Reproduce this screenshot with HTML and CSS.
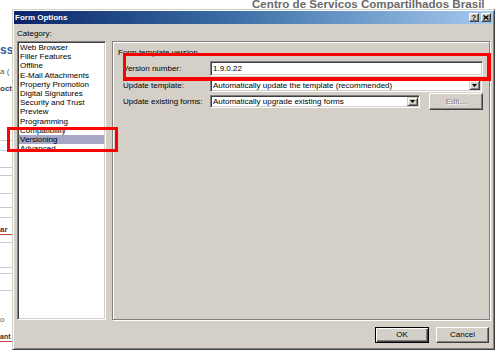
FILE: index.html
```html
<!DOCTYPE html>
<html>
<head>
<meta charset="utf-8">
<title>Form Options</title>
<link rel="stylesheet" href="styles.css">
</head>
<body>
<div class="page">
  <div class="page-header">Centro de Servicos Compartilhados Brasil</div>
  <div class="page-strip">
    <div class="frag frag-ss">ss</div>
    <div class="frag frag-a">a (</div>
    <div class="frag frag-oct">oct</div>
    <div class="sline s1"></div>
    <div class="sline s2"></div>
    <div class="sline s3"></div>
    <div class="sline s4"></div>
    <div class="sline s5"></div>
    <div class="sline s6"></div>
    <div class="sline s7"></div>
    <div class="frag frag-ar">ar</div>
    <div class="sline s8"></div>
    <div class="sline s9"></div>
    <div class="sline s10"></div>
    <div class="sline s11"></div>
    <div class="frag frag-o">o</div>
    <div class="frag frag-anty">ant</div>
  </div>
</div>

<div class="dialog">
  <div class="titlebar">
    <span class="title">Form Options</span>
    <span class="tb-btns">
      <span class="tb-btn">?</span>
      <span class="tb-btn"><svg width="6" height="5" viewBox="0 0 6 5"><path d="M0.5 0.5 L5.5 4.5 M5.5 0.5 L0.5 4.5" stroke="#000" stroke-width="1.4" fill="none"/></svg></span>
    </span>
  </div>
  <div class="body">
    <div class="cat-label">Category:</div>
    <ul class="listbox">
      <li>Web Browser</li>
      <li>Filler Features</li>
      <li>Offline</li>
      <li>E-Mail Attachments</li>
      <li>Property Promotion</li>
      <li>Digital Signatures</li>
      <li>Security and Trust</li>
      <li>Preview</li>
      <li>Programming</li>
      <li>Compatibility</li>
      <li class="selected">Versioning</li>
      <li>Advanced</li>
    </ul>
    <div class="panel">
      <div class="section">Form template version</div>
      <div class="row row-version">
        <span class="lbl">Version number:</span>
        <div class="textbox">1.9.0.22</div>
      </div>
      <div class="row row-update">
        <span class="lbl">Update template:</span>
        <div class="select select-wide">
          <span class="sel-text">Automatically update the template (recommended)</span>
          <span class="dd-btn"><svg width="5" height="3" viewBox="0 0 5 3"><path d="M0 0 H5 L2.5 3 Z" fill="#000"/></svg></span>
        </div>
      </div>
      <div class="row row-existing">
        <span class="lbl">Update existing forms:</span>
        <div class="select select-narrow">
          <span class="sel-text">Automatically upgrade existing forms</span>
          <span class="dd-btn"><svg width="5" height="3" viewBox="0 0 5 3"><path d="M0 0 H5 L2.5 3 Z" fill="#000"/></svg></span>
        </div>
        <button class="btn btn-edit" disabled>Edit...</button>
      </div>
    </div>
  </div>
  <div class="footer">
    <button class="btn btn-ok">OK</button>
    <button class="btn btn-cancel">Cancel</button>
  </div>
</div>

<div class="annot annot-list"></div>
<div class="annot annot-version"></div>
</body>
</html>
```

FILE: styles.css
```css
* { box-sizing: border-box; }
html, body { margin: 0; padding: 0; }
body {
  width: 503px;
  height: 352px;
  background: #fff;
  position: relative;
  overflow: hidden;
  font-family: "Liberation Sans", Arial, sans-serif;
  font-size: 8px;
  color: #000;
}

/* background page */
.page-header {
  margin-top: -2px;
  height: 12px;
  line-height: 12px;
  padding-left: 252px;
  font-weight: bold;
  font-size: 11.6px;
  color: #6b6b6b;
  white-space: nowrap;
}
.page-strip { width: 12px; overflow: hidden; }
.frag { white-space: nowrap; font-size: 8px; line-height: 8px; height: 8px; color: #333; }
.frag-ss { margin-top: 35px; height: 10px; line-height: 10px; font-size: 12px; font-weight: bold; color: #2d5ca6; }
.frag-a { margin-top: 13px; color: #555; }
.frag-oct { margin-top: 9px; color: #444; font-weight: bold; }
.frag-ar { margin-top: 8px; color: #6a2a2a; font-weight: bold; border-bottom: 1px solid #d04040; height: 9px; }
.frag-o { margin-top: 25px; color: #555; }
.frag-anty { margin-top: 9px; color: #333; font-weight: bold; border-bottom: 1px solid #d04040; height: 9px; font-size: 7px; }
.sline { height: 1px; background: #c9c9d3; }
.s1 { margin-top: 47px; }
.s2 { margin-top: 9px; }
.s3 { margin-top: 16px; }
.s4 { margin-top: 7px; }
.s5 { margin-top: 17px; }
.s6 { margin-top: 13px; }
.s7 { margin-top: 9px; }
.s8 { margin-top: 7px; }
.s9 { margin-top: 24px; }
.s10 { margin-top: 5px; }
.s11 { margin-top: 16px; }

/* dialog window */
.dialog {
  position: absolute;
  left: 12px;
  top: 9px;
  width: 483px;
  height: 341px;
  background: #d4d0c8;
  border: 1px solid;
  border-color: #d4d0c8 #404040 #404040 #d4d0c8;
  padding: 1px;
  box-shadow: inset 1px 1px 0 #fff, inset -1px -1px 0 #808080;
  display: flex;
  flex-direction: column;
}
.titlebar {
  height: 13px;
  background: linear-gradient(to right, #0a246a 0%, #3a6ea5 45%, #a6caf0 100%);
  display: flex;
  align-items: center;
  justify-content: space-between;
  padding: 0 2px 0 1px;
}
.title { color: #fff; font-weight: bold; font-size: 8px; line-height: 10px; }
.tb-btns { display: flex; gap: 2px; }
.tb-btn {
  width: 10px;
  height: 9px;
  background: #d4d0c8;
  border: 1px solid;
  border-color: #fff #404040 #404040 #fff;
  box-shadow: inset -1px -1px 0 #808080;
  display: flex;
  align-items: center;
  justify-content: center;
  font-weight: bold;
  font-size: 7px;
  line-height: 7px;
}

.body {
  display: grid;
  grid-template-columns: 89px 378px;
  grid-template-rows: 9px 279px;
  column-gap: 6px;
  row-gap: 3px;
  padding: 5px 3px 0 3px;
}
.cat-label { grid-column: 1 / 3; line-height: 9px; }

.listbox {
  margin: 0;
  padding: 1px;
  list-style: none;
  background: #fff;
  border: 1px solid;
  border-color: #808080 #fff #fff #808080;
  box-shadow: inset 1px 1px 0 #404040, inset -1px -1px 0 #d4d0c8;
  overflow: hidden;
}
.listbox li {
  height: 9.2px;
  line-height: 9.2px;
  padding-left: 1px;
  white-space: nowrap;
}
.listbox li.selected { background: #a6a6c6; }

.panel {
  border: 1px solid #808080;
  box-shadow: 1px 1px 0 #fff, inset 1px 1px 0 #fff;
  padding: 5.5px 6px 0 5px;
}
.section { height: 9px; line-height: 9px; white-space: nowrap; }

.row { display: flex; align-items: center; margin-left: 5px; }
.lbl { width: 87px; white-space: nowrap; }
.row-version { margin-top: 4.5px; height: 15px; }
.row-update { margin-top: 2px; height: 14px; }
.row-existing { margin-top: 1px; height: 17px; }

.textbox, .select {
  background: #fff;
  border: 1px solid;
  border-color: #808080 #fff #fff #808080;
  box-shadow: inset 1px 1px 0 #404040, inset -1px -1px 0 #d4d0c8;
  padding: 1px 1px 1px 2px;
  white-space: nowrap;
}
.textbox { width: 273px; height: 15px; line-height: 11px; }
.select { display: flex; align-items: center; }
.select-wide { width: 272px; height: 14px; }
.select-narrow { width: 210px; height: 13px; }
.sel-text { flex: 1; overflow: hidden; line-height: 9px; }
.dd-btn {
  width: 11px;
  align-self: stretch;
  background: #d4d0c8;
  border: 1px solid;
  border-color: #d4d0c8 #404040 #404040 #d4d0c8;
  box-shadow: inset 1px 1px 0 #fff, inset -1px -1px 0 #808080;
  display: flex;
  align-items: center;
  justify-content: center;
}
.dd-btn svg { display: block; }

.btn {
  font-family: "Liberation Sans", Arial, sans-serif;
  font-size: 8px;
  background: #d4d0c8;
  color: #000;
  padding: 0;
  margin: 0;
  border: 1px solid;
  border-color: #fff #404040 #404040 #fff;
  box-shadow: inset -1px -1px 0 #808080;
  line-height: 10px;
}
.btn-edit {
  width: 54px;
  height: 17px;
  margin-left: 9px;
  color: #808080;
  text-shadow: 1px 1px 0 #fff;
}

.footer {
  display: flex;
  justify-content: flex-end;
  gap: 7px;
  margin-top: 7px;
  padding-right: 4px;
}
.btn-ok {
  width: 54px;
  height: 16px;
  border: 1px solid #000;
  box-shadow: inset 1px 1px 0 #fff, inset -1px -1px 0 #404040, inset -2px -2px 0 #808080;
}
.btn-cancel { width: 53px; height: 16px; }

/* red annotation boxes over the screenshot */
.annot { position: absolute; border: 3px solid #ff0000; }
.annot-list { left: 7px; top: 127px; width: 111px; height: 25px; }
.annot-version { left: 123px; top: 53px; width: 368px; height: 28px; border-width: 3px 4px 4px 3px; }
```
